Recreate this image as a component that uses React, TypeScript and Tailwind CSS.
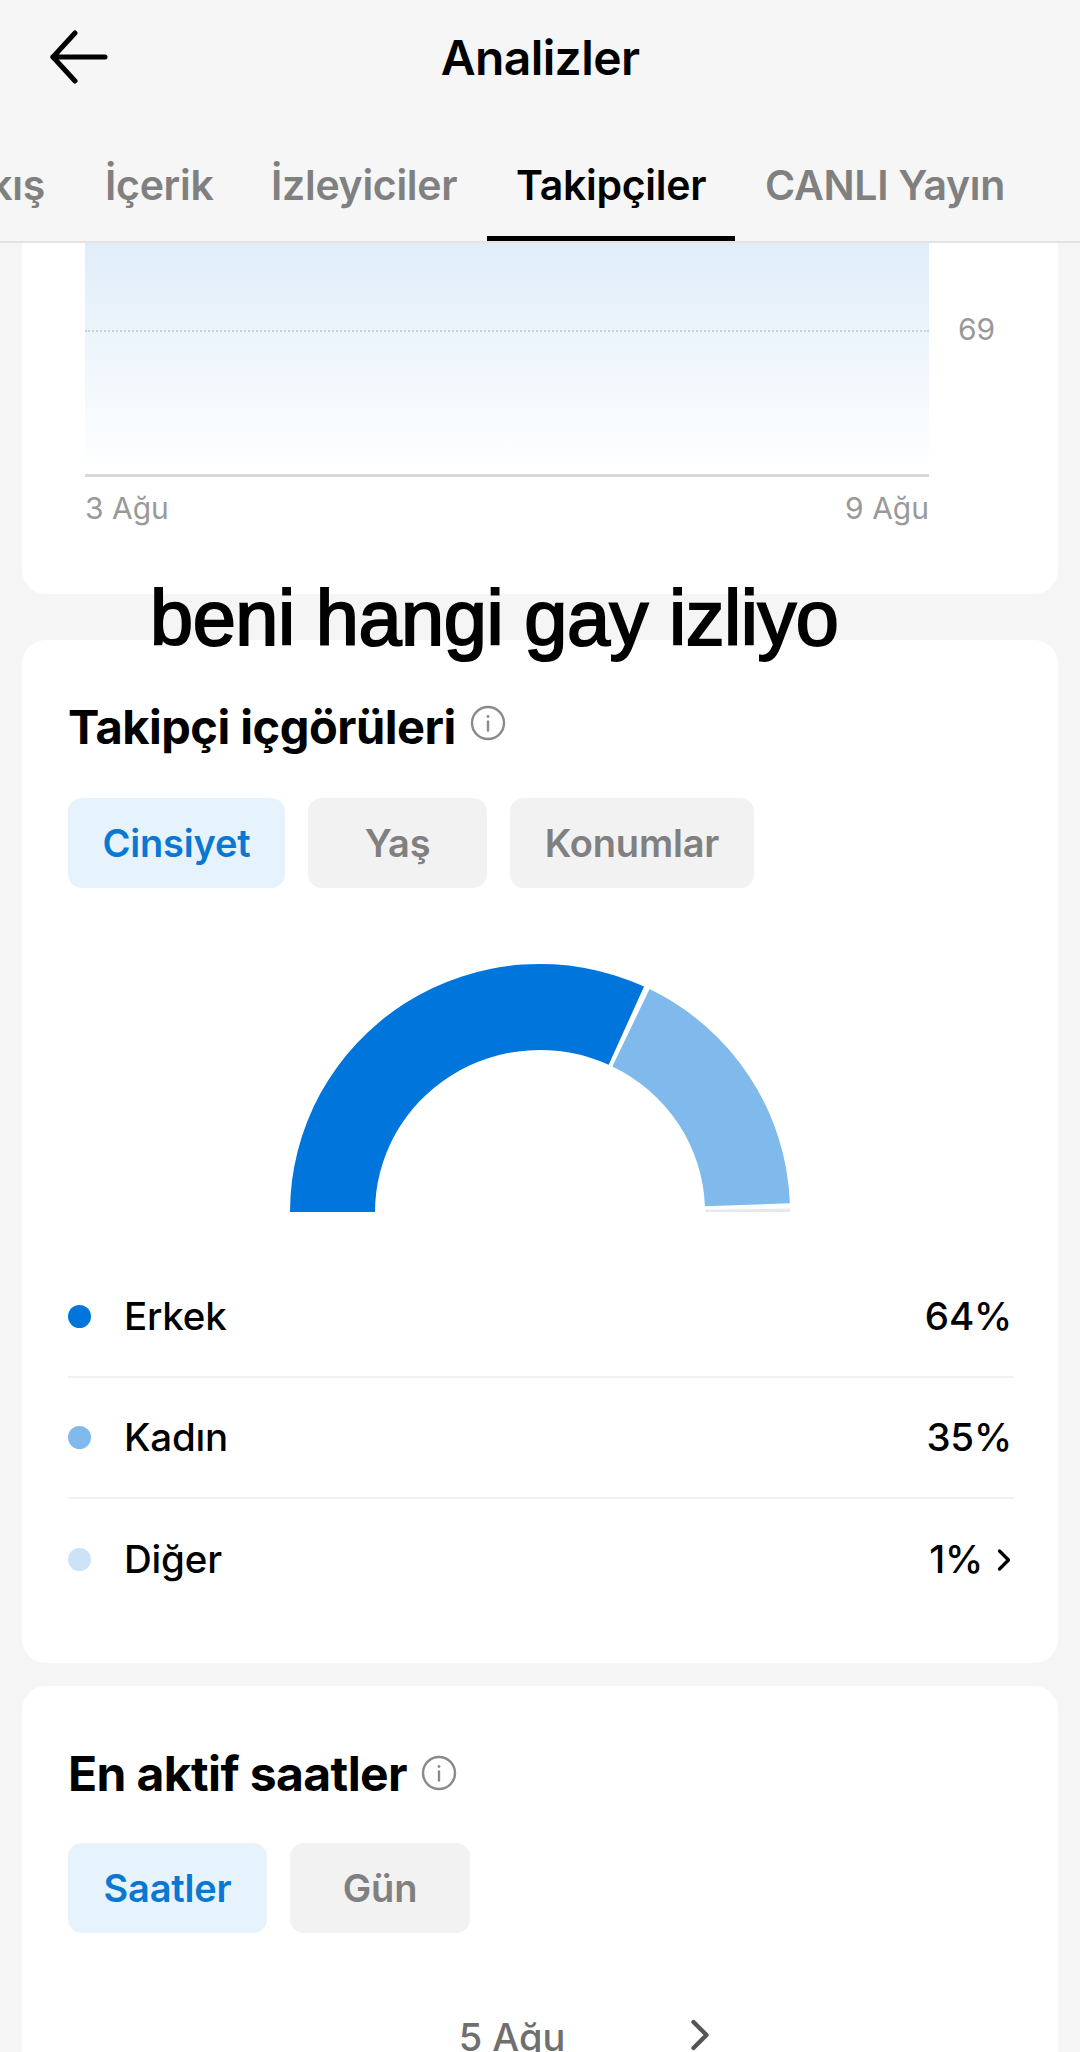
import { ChevronRight } from 'lucide-react';

const tabs = [
  { label: 'İçerik', width: 'w-[107px]', margin: 'ml-[60px]' },
  { label: 'İzleyiciler', width: 'w-[186px]', margin: 'ml-[59px]' },
];

const genderRows = [
  { label: 'Erkek', value: '64%', dot: 'bg-[#0075db]' },
  { label: 'Kadın', value: '35%', dot: 'bg-[#80baec]' },
  { label: 'Diğer', value: '1%', dot: 'bg-[#cce3f7]', more: true },
];

// the half circle is a bit wider than it is tall in the screenshot
const OUTER = { rx: 250, ry: 248 };
const INNER = { rx: 165, ry: 162 };

function polar(r: { rx: number; ry: number }, deg: number) {
  // deg runs clockwise from the left end of the half circle
  const a = (deg * Math.PI) / 180;
  return `${(260 - r.rx * Math.cos(a)).toFixed(2)} ${(252 - r.ry * Math.sin(a)).toFixed(2)}`;
}

function arc(from: number, to: number) {
  return `M${polar(OUTER, from)} A${OUTER.rx} ${OUTER.ry} 0 0 1 ${polar(OUTER, to)} L${polar(INNER, to)} A${INNER.rx} ${INNER.ry} 0 0 0 ${polar(INNER, from)} Z`;
}

function InfoIcon({ className }: { className?: string }) {
  return (
    <svg className={className} width="36" height="36" viewBox="0 0 36 36" fill="none" stroke="#8a8a8a" strokeWidth="2.4">
      <circle cx="18" cy="18" r="16" />
      <path d="M18 16.5v9" strokeLinecap="round" />
      <circle cx="18" cy="11.5" r="1.4" fill="#8a8a8a" stroke="none" />
    </svg>
  );
}

function Pill({ label, active, width }: { label: string; active?: boolean; width: string }) {
  return (
    <div
      className={`${width} h-[90px] rounded-[14px] flex items-center justify-center text-[38px] font-semibold tracking-[-0.2px] ${
        active ? 'bg-[#e6f3fd] text-[#0a78d2]' : 'bg-[#f2f2f2] text-[#808080]'
      }`}
    >
      {label}
    </div>
  );
}

export default function App() {
  return (
    <div className="relative w-[1080px] h-[2052px] overflow-hidden bg-[#f5f5f5] font-['Inter',sans-serif] text-black">
      <header className="h-[243px] border-b-2 border-[#e3e3e3] bg-[#f6f6f6]">
        <div className="h-[116px] relative flex items-center justify-center">
          <svg className="absolute left-[50px] top-[30px]" width="58" height="54" viewBox="0 0 58 54" fill="none" stroke="#000" strokeWidth="5" strokeLinecap="round" strokeLinejoin="round">
            <path d="M25 3 3 27l22 24" />
            <path d="M3 27h52" />
          </svg>
          <h1 className="text-[48px] font-semibold tracking-[-0.6px]">Analizler</h1>
        </div>
        <nav className="relative h-[125px] whitespace-nowrap text-[41px] font-semibold tracking-[-0.3px] text-[#808080]">
          <div className="flex pt-[46px] leading-[46px]">
            <span className="w-[45px] overflow-hidden flex justify-end">Akış</span>
            {tabs.map((tab) => (
              <span key={tab.label} className={`${tab.width} ${tab.margin}`}>
                {tab.label}
              </span>
            ))}
            <span className="ml-[59px] w-[191px] text-black">Takipçiler</span>
            <span className="ml-[58px]">CANLI Yayın</span>
          </div>
          <div className="absolute left-[487px] bottom-0 w-[248px] h-[5px] bg-black" />
        </nav>
      </header>

      <main className="px-[22px]">
        {/* chart card, scrolled under the header */}
        <section className="h-[351px] bg-white rounded-b-[24px] pl-[63px] pr-[22px]">
          <div className="flex">
            <div className="relative w-[844px] h-[234px] bg-gradient-to-b from-[#e0edf9] to-white border-b-[3px] border-[#d9d9d9]">
              <div className="absolute left-0 right-0 top-[87px] border-t-2 border-dotted border-[#c6d2dc]" />
            </div>
            <span className="ml-[29px] mt-[68px] text-[30px] leading-[36px] text-[#999999]">69</span>
          </div>
          <div className="w-[844px] flex justify-between mt-[13px] text-[30px] leading-[36px] text-[#999999]">
            <span>3 Ağu</span>
            <span>9 Ağu</span>
          </div>
        </section>

        <section className="mt-[46px] h-[1023px] bg-white rounded-[24px] pl-[46px] pr-[44px] pt-[62px]">
          <div className="flex items-center gap-[14px] h-[50px]">
            <h2 className="text-[47px] font-bold tracking-[-0.5px]">Takipçi içgörüleri</h2>
            <InfoIcon className="-translate-y-[4px]" />
          </div>
          <div className="flex mt-[46px] gap-[23px]">
            <Pill label="Cinsiyet" active width="w-[217px]" />
            <Pill label="Yaş" width="w-[179px]" />
            <Pill label="Konumlar" width="w-[244px]" />
          </div>
          <div className="flex justify-center mt-[72px] pr-[2px]">
            <svg width="520" height="254" viewBox="0 0 520 254">
              <path d={arc(0, 114.6)} fill="#0075db" />
              <path d={arc(116, 178)} fill="#80baec" />
              <path d={arc(179.2, 180)} fill="#e4e9ee" />
            </svg>
          </div>
          <ul className="mt-[43px] divide-y-2 divide-[#f1f1f1]">
            {genderRows.map((row) => (
              <li key={row.label} className="h-[121px] flex items-center text-[38.5px] font-medium tracking-[-0.2px]">
                <span className={`w-[23px] h-[23px] rounded-full ${row.dot}`} />
                <span className="ml-[33px] flex-1">{row.label}</span>
                <span className={row.more ? '' : 'mr-[2px]'}>{row.value}</span>
                {row.more && <ChevronRight className="ml-[3px] -mr-[8px]" size={36} strokeWidth={2.2} />}
              </li>
            ))}
          </ul>
        </section>

        <section className="mt-[23px] h-[400px] bg-white rounded-[24px] px-[46px] pt-[64px]">
          <div className="flex items-center gap-[14px] h-[48px]">
            <h2 className="text-[48px] font-bold tracking-[-0.6px]">En aktif saatler</h2>
            <InfoIcon className="-translate-y-[1px]" />
          </div>
          <div className="flex mt-[45px] gap-[23px]">
            <Pill label="Saatler" active width="w-[199px]" />
            <Pill label="Gün" width="w-[180px]" />
          </div>
          <div className="relative mt-[82px] flex justify-center">
            <span className="ml-[-56px] text-[38px] font-medium leading-[44px] text-[#6f6f6f]">5 Ağu</span>
            <ChevronRight className="absolute left-[606px] top-[-6px]" size={52} strokeWidth={2} color="#555" />
          </div>
        </section>
      </main>

      <p className="absolute left-[150px] top-[574px] font-['Liberation_Sans',sans-serif] text-[77.5px] leading-[88px] tracking-[-0.45px] whitespace-nowrap [-webkit-text-stroke:2px_black]">
        beni hangi gay izliyo
      </p>
    </div>
  );
}
